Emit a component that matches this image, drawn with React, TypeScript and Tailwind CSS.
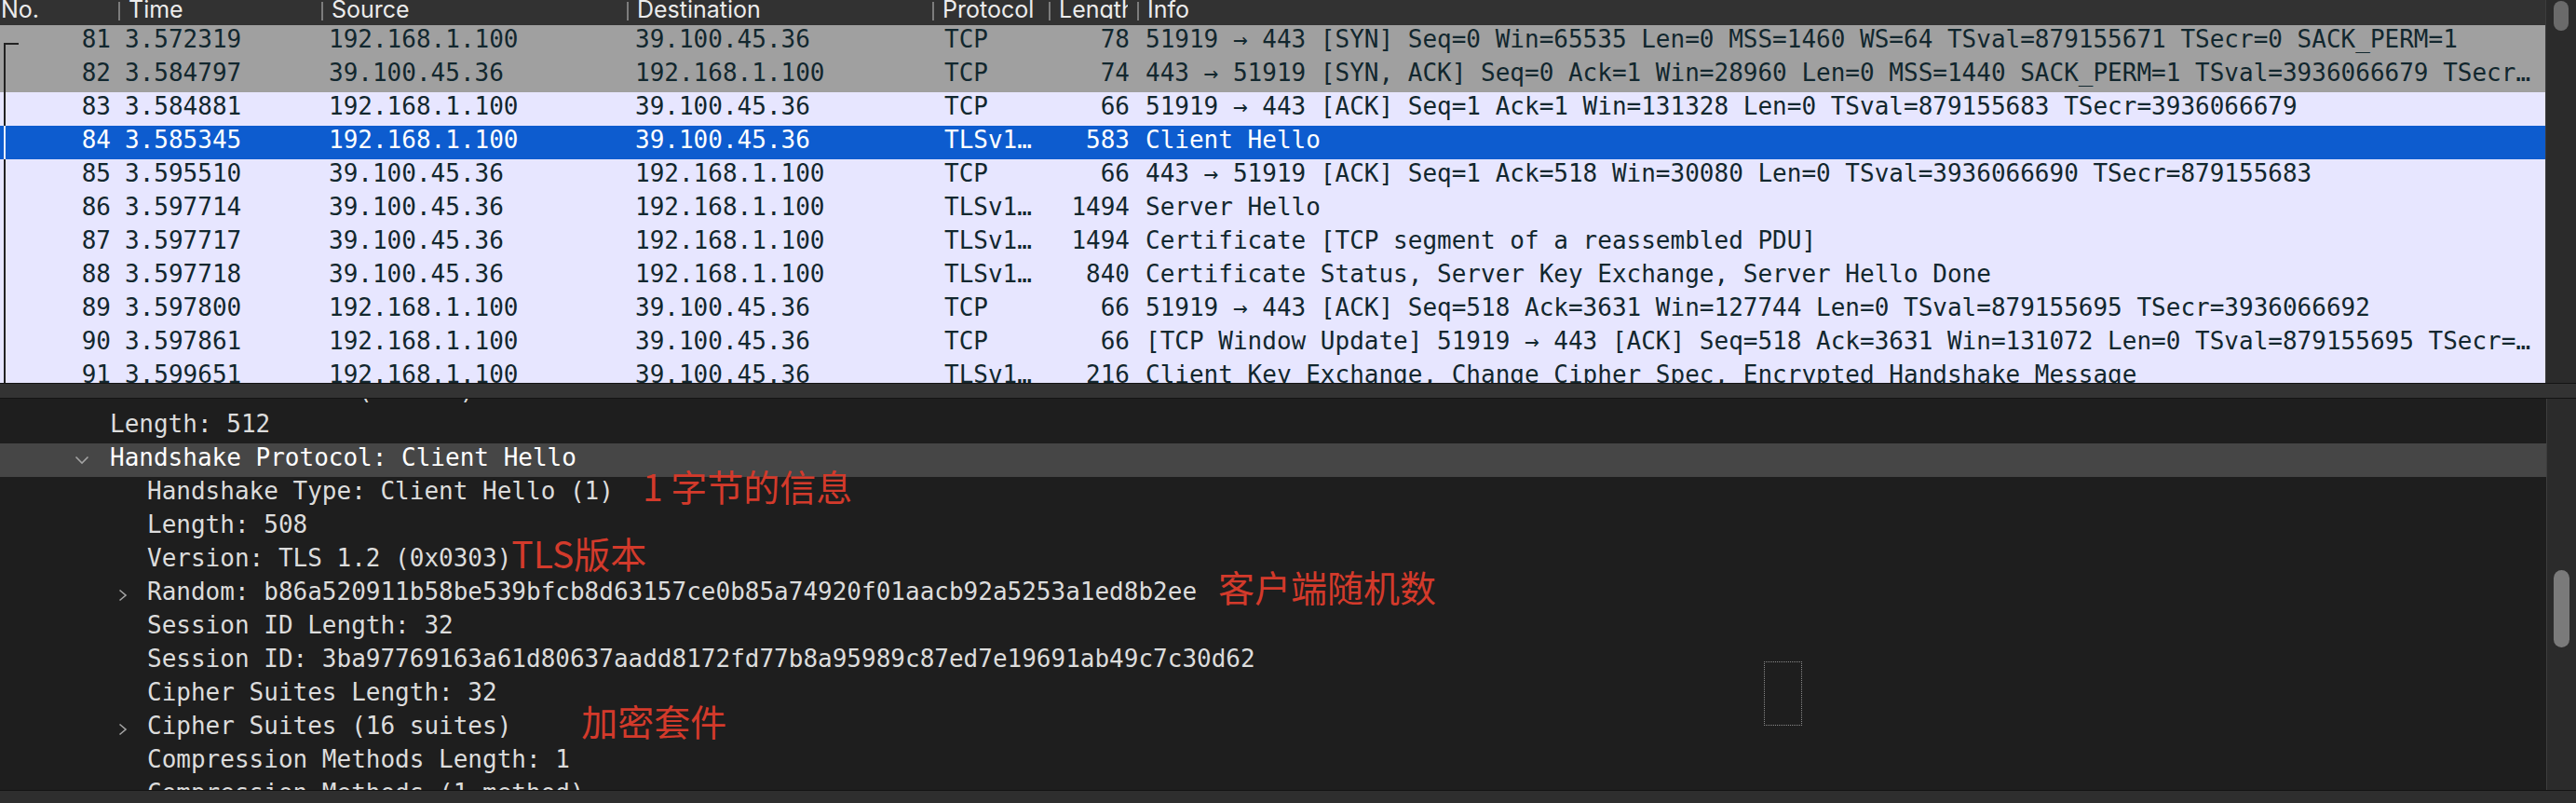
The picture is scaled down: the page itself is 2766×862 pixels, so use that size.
import React from "react";

type Kind = "syn" | "tcp" | "sel";

interface Packet {
  no: number;
  time: string;
  src: string;
  dst: string;
  proto: string;
  len: number;
  info: string;
  kind: Kind;
}

interface Field {
  text: string;
  level: 1 | 2;
  chevron?: "down" | "right";
  highlight?: boolean;
  note?: string;
  noteCls?: string;
}

const packets: Packet[] = [
  { no: 81, time: "3.572319", src: "192.168.1.100", dst: "39.100.45.36", proto: "TCP", len: 78, info: "51919 → 443 [SYN] Seq=0 Win=65535 Len=0 MSS=1460 WS=64 TSval=879155671 TSecr=0 SACK_PERM=1", kind: "syn" },
  { no: 82, time: "3.584797", src: "39.100.45.36", dst: "192.168.1.100", proto: "TCP", len: 74, info: "443 → 51919 [SYN, ACK] Seq=0 Ack=1 Win=28960 Len=0 MSS=1440 SACK_PERM=1 TSval=3936066679 TSecr…", kind: "syn" },
  { no: 83, time: "3.584881", src: "192.168.1.100", dst: "39.100.45.36", proto: "TCP", len: 66, info: "51919 → 443 [ACK] Seq=1 Ack=1 Win=131328 Len=0 TSval=879155683 TSecr=3936066679", kind: "tcp" },
  { no: 84, time: "3.585345", src: "192.168.1.100", dst: "39.100.45.36", proto: "TLSv1…", len: 583, info: "Client Hello", kind: "sel" },
  { no: 85, time: "3.595510", src: "39.100.45.36", dst: "192.168.1.100", proto: "TCP", len: 66, info: "443 → 51919 [ACK] Seq=1 Ack=518 Win=30080 Len=0 TSval=3936066690 TSecr=879155683", kind: "tcp" },
  { no: 86, time: "3.597714", src: "39.100.45.36", dst: "192.168.1.100", proto: "TLSv1…", len: 1494, info: "Server Hello", kind: "tcp" },
  { no: 87, time: "3.597717", src: "39.100.45.36", dst: "192.168.1.100", proto: "TLSv1…", len: 1494, info: "Certificate [TCP segment of a reassembled PDU]", kind: "tcp" },
  { no: 88, time: "3.597718", src: "39.100.45.36", dst: "192.168.1.100", proto: "TLSv1…", len: 840, info: "Certificate Status, Server Key Exchange, Server Hello Done", kind: "tcp" },
  { no: 89, time: "3.597800", src: "192.168.1.100", dst: "39.100.45.36", proto: "TCP", len: 66, info: "51919 → 443 [ACK] Seq=518 Ack=3631 Win=127744 Len=0 TSval=879155695 TSecr=3936066692", kind: "tcp" },
  { no: 90, time: "3.597861", src: "192.168.1.100", dst: "39.100.45.36", proto: "TCP", len: 66, info: "[TCP Window Update] 51919 → 443 [ACK] Seq=518 Ack=3631 Win=131072 Len=0 TSval=879155695 TSecr=…", kind: "tcp" },
  { no: 91, time: "3.599651", src: "192.168.1.100", dst: "39.100.45.36", proto: "TLSv1…", len: 216, info: "Client Key Exchange, Change Cipher Spec, Encrypted Handshake Message", kind: "tcp" },
];

const fields: Field[] = [
  { text: "Version: TLS 1.0 (0x0301)", level: 1 },
  { text: "Length: 512", level: 1 },
  { text: "Handshake Protocol: Client Hello", level: 1, chevron: "down", highlight: true },
  { text: "Handshake Type: Client Hello (1)", level: 2, note: "1 字节的信息", noteCls: "ml-[31px]" },
  { text: "Length: 508", level: 2 },
  { text: "Version: TLS 1.2 (0x0303)", level: 2, note: "TLS版本", noteCls: "ml-0" },
  { text: "Random: b86a520911b58be539bfcb8d63157ce0b85a74920f01aacb92a5253a1ed8b2ee", level: 2, chevron: "right", note: "客户端随机数", noteCls: "ml-[23px]" },
  { text: "Session ID Length: 32", level: 2 },
  { text: "Session ID: 3ba97769163a61d80637aadd8172fd77b8a95989c87ed7e19691ab49c7c30d62", level: 2 },
  { text: "Cipher Suites Length: 32", level: 2 },
  { text: "Cipher Suites (16 suites)", level: 2, chevron: "right", note: "加密套件", noteCls: "ml-[75px]" },
  { text: "Compression Methods Length: 1", level: 2 },
  { text: "Compression Methods (1 method)", level: 2, chevron: "right" },
];

const columns = [
  { label: "No.", cls: "w-[127px]" },
  { label: "Time", cls: "w-[218px]" },
  { label: "Source", cls: "w-[328px]" },
  { label: "Destination", cls: "w-[328px]" },
  { label: "Protocol", cls: "w-[125px]" },
  { label: "Length", cls: "w-[95px] pr-[10px]" },
  { label: "Info", cls: "flex-1" },
];

const rowStyles: Record<Kind, string> = {
  syn: "bg-[#a0a0a0] text-[#12272e]",
  tcp: "bg-[#e7e6ff] text-[#12272e]",
  sel: "bg-[#0d5ccf] text-white",
};

const ChevronDown = () => (
  <svg width="16" height="10" viewBox="0 0 16 10">
    <polyline points="1.5,1.5 8,8 14.5,1.5" fill="none" stroke="#a4a4a4" strokeWidth="1.6" />
  </svg>
);

const ChevronRight = () => (
  <svg width="10" height="14" viewBox="0 0 10 14" className="mt-[2px]">
    <polyline points="1.5,1.5 8,7 1.5,12.5" fill="none" stroke="#a4a4a4" strokeWidth="1.6" />
  </svg>
);

const PacketRow = ({ p, first }: { p: Packet; first: boolean }) => (
  <div className={"relative flex h-[36px] shrink-0 items-start leading-[30px] " + rowStyles[p.kind]}>
    {first ? (
      <>
        <span className="absolute left-[4px] top-[19px] h-[2px] w-[16px] bg-[#222]" />
        <span className="absolute left-[4px] top-[19px] bottom-0 w-[2px] bg-[#222]" />
      </>
    ) : (
      <span className={"absolute left-[4px] top-0 bottom-0 w-[2px] " + (p.kind === "sel" ? "bg-[#e8eefc]" : "bg-[#222]")} />
    )}
    <div className="w-[127px] shrink-0 pr-[8px] text-right">{p.no}</div>
    <div className="w-[218px] shrink-0 pl-[7px]">{p.time}</div>
    <div className="w-[328px] shrink-0 pl-[8px]">{p.src}</div>
    <div className="w-[328px] shrink-0 pl-[9px]">{p.dst}</div>
    <div className="w-[125px] shrink-0 pl-[13px]">{p.proto}</div>
    <div className="w-[95px] shrink-0 pr-[8px] text-right">{p.len}</div>
    <div className="min-w-0 flex-1 overflow-hidden whitespace-pre pl-[9px]">{p.info}</div>
  </div>
);

const FieldRow = ({ f }: { f: Field }) => (
  <div
    className={
      "flex h-[36px] shrink-0 items-start whitespace-pre " +
      (f.level === 1 ? "pl-[80px] " : "pl-[127px] ") +
      (f.highlight ? "bg-[#464646] text-white" : "text-[#dcdcdc]")
    }
  >
    <div className={"flex h-[36px] shrink-0 items-center " + (f.level === 1 ? "w-[38px]" : "w-[31px]")}>
      {f.chevron === "down" && <ChevronDown />}
      {f.chevron === "right" && <ChevronRight />}
    </div>
    <span className="leading-[30px]">{f.text}</span>
    {f.note && (
      <span
        className={
          "-mt-[9px] font-['Noto_Sans_CJK_SC',sans-serif] text-[39px] leading-[36px] text-[#d33a2b] " + f.noteCls
        }
      >
        {f.note}
      </span>
    )}
  </div>
);

export default function App() {
  return (
    <div className="flex h-[862px] w-[2766px] flex-col overflow-hidden bg-[#1e1e1e] font-['DejaVu_Sans_Mono',monospace] text-[26px]">
      {/* packet list */}
      <div className="flex h-[411px] shrink-0">
        <div className="flex min-w-0 flex-1 flex-col overflow-hidden">
          <div className="flex h-[27px] shrink-0 bg-[#323232] font-['Inter',sans-serif] text-[25px] leading-[20px] text-[#ececec]">
            {columns.map((c, i) => (
              <div key={c.label} className={"flex shrink-0 items-start overflow-hidden " + c.cls}>
                {i > 0 && <div className="mt-[2px] h-[20px] w-[2px] shrink-0 bg-[#7c7c7c]" />}
                <span className={"min-w-0 overflow-hidden whitespace-nowrap " + (i > 0 ? "pl-[9px]" : "pl-[1px]")}>
                  {c.label}
                </span>
              </div>
            ))}
          </div>
          {packets.map((p, i) => (
            <PacketRow key={p.no} p={p} first={i === 0} />
          ))}
        </div>
        <div className="w-[33px] shrink-0 border-l border-[#3c3c3c] bg-[#2b2b2b]">
          <div className="ml-[8px] mt-[1px] h-[32px] w-[16px] rounded-full bg-[#6a6a6a]" />
        </div>
      </div>

      {/* splitter */}
      <div className="h-[17px] shrink-0 border-b border-t border-[#141414] bg-[#333333]" />

      {/* packet details */}
      <div className="flex h-[420px] shrink-0">
        <div className="relative min-w-0 flex-1 overflow-hidden">
          <div className="-mt-[24px] flex flex-col">
            {fields.map((f, i) => (
              <FieldRow key={i} f={f} />
            ))}
          </div>
          <div className="absolute left-[1894px] top-[282px] h-[69px] w-[41px] border border-dotted border-[#8a8a8a]" />
        </div>
        <div className="w-[32px] shrink-0 border-l border-[#3d3d3d] bg-[#2b2b2b]">
          <div className="ml-[7px] mt-[184px] h-[83px] w-[17px] rounded-full bg-[#7a7a7a]" />
        </div>
      </div>

      <div className="h-[14px] shrink-0 border-t border-[#141414] bg-[#2e2e2e]" />
    </div>
  );
}
